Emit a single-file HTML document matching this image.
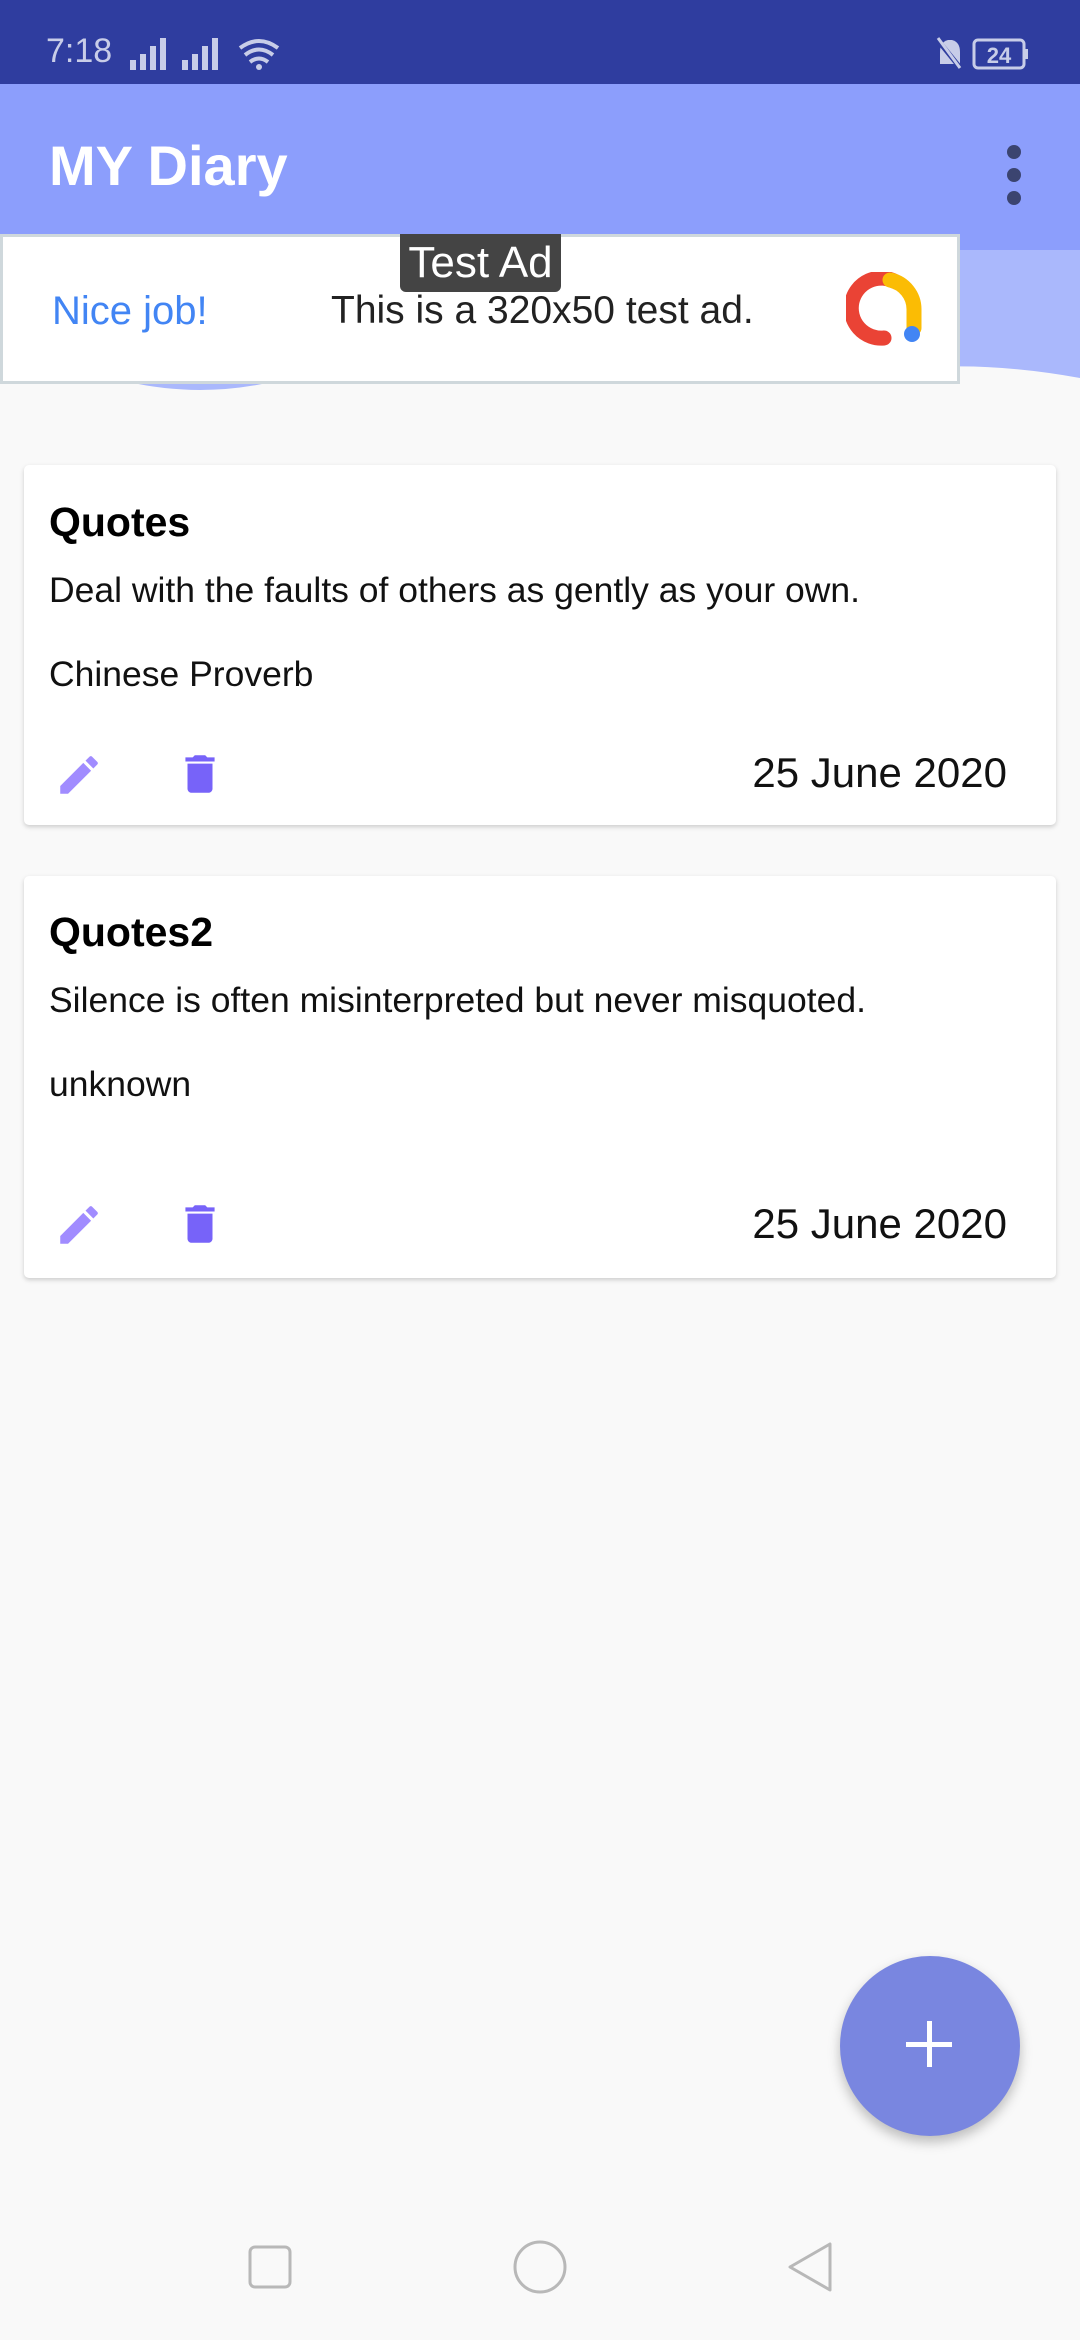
<!DOCTYPE html>
<html><head><meta charset="utf-8"><style>
*{margin:0;padding:0;box-sizing:border-box}
body{width:1080px;height:2340px;background:#f9f9f9;font-family:"Liberation Sans",sans-serif;position:relative;overflow:hidden}
.abs{position:absolute}
.card{position:absolute;left:24px;width:1032px;background:#fff;border-radius:5px;box-shadow:0 2px 5px rgba(0,0,0,.18)}
.t{position:absolute;left:25px;font-weight:bold;font-size:41px;color:#000;line-height:1}
.b{position:absolute;left:25px;font-size:35.5px;color:#111;line-height:1;white-space:nowrap}
.d{position:absolute;right:49px;font-size:42px;color:#111;line-height:1}
</style></head><body>
<div class="abs" style="left:0;top:0;width:1080px;height:84px;background:#2f3d9f"></div>
<div class="abs" style="left:46px;top:34px;color:#c8cde8;font-size:34px;line-height:1">7:18</div>
<svg class="abs" style="left:128px;top:36px" width="160" height="36" viewBox="0 0 160 36">
<g fill="#c8cde8"><rect x="2" y="24" width="6" height="10"/><rect x="12" y="18" width="6" height="16"/><rect x="22" y="10" width="6" height="24"/><rect x="32" y="2" width="6" height="32"/>
<rect x="54" y="24" width="6" height="10"/><rect x="64" y="18" width="6" height="16"/><rect x="74" y="10" width="6" height="24"/><rect x="84" y="2" width="6" height="32"/></g>
<path d="M112 12 Q131 -2 150 12 M117 19 Q131 8 145 19 M122 26 Q131 19 140 26" stroke="#c8cde8" stroke-width="4" fill="none"/><circle cx="131" cy="31" r="3" fill="#c8cde8"/></svg>
<svg class="abs" style="left:934px;top:36px" width="100" height="36" viewBox="0 0 100 36">
<path d="M6 28 L6 16 Q6 6 14 4 L18 4 Q26 6 26 16 L26 28 Z" fill="#c8cde8"/><line x1="2" y1="2" x2="28" y2="34" stroke="#2f3d9f" stroke-width="5"/><line x1="4" y1="2" x2="26" y2="32" stroke="#c8cde8" stroke-width="3"/>
<rect x="40" y="4" width="50" height="28" rx="4" fill="none" stroke="#c8cde8" stroke-width="3"/><rect x="91" y="13" width="3" height="10" fill="#c8cde8"/>
<text x="65" y="27" text-anchor="middle" font-family="Liberation Sans" font-weight="bold" font-size="22" fill="#c8cde8">24</text></svg>
<div class="abs" style="left:0;top:84px;width:1080px;height:170px;background:#8c9efc"></div>
<svg class="abs" style="left:0;top:250px" width="1080" height="150" viewBox="0 0 1080 150">
<path d="M0 0 H1080 V128 Q980 110 900 120 L900 0 Z" fill="#aab8fc"/>
<path d="M120 130 Q200 150 280 130 L280 120 L120 120Z" fill="#aab8fc"/></svg>
<div class="abs" style="left:49px;top:138px;color:#fff;font-size:56px;font-weight:bold;line-height:1">MY Diary</div>
<div class="abs" style="left:1007px;top:145px;width:14px;height:14px;border-radius:7px;background:#3b4470"></div>
<div class="abs" style="left:1007px;top:168px;width:14px;height:14px;border-radius:7px;background:#3b4470"></div>
<div class="abs" style="left:1007px;top:191px;width:14px;height:14px;border-radius:7px;background:#3b4470"></div>
<div class="abs" style="left:0;top:234px;width:960px;height:150px;background:#fff;border:3px solid #cfd8dc"></div>
<div class="abs" style="left:400px;top:234px;width:161px;height:58px;background:#444;border-radius:0 0 6px 6px;color:#fff;font-size:44px;line-height:58px;text-align:center">Test Ad</div>
<div class="abs" style="left:52px;top:291px;color:#4285f4;font-size:40px;line-height:40px">Nice job!</div>
<div class="abs" style="left:331px;top:291px;color:#222;font-size:39px;line-height:40px">This is a 320x50 test ad.</div>
<svg class="abs" style="left:846px;top:272px" width="80" height="76" viewBox="0 0 80 76">
<path d="M38 66 A30 30 0 1 1 50 10" stroke="#ea4335" stroke-width="15" fill="none" stroke-linecap="round"/>
<path d="M44 8 A30 30 0 0 1 68 38 L68 56" stroke="#fbbc04" stroke-width="15" fill="none" stroke-linecap="round"/>
<circle cx="66" cy="62" r="8" fill="#4285f4"/></svg>

<div class="card" style="top:465px;height:360px">
<div class="t" style="top:37px">Quotes</div>
<div class="b" style="top:108px">Deal with the faults of others as gently as your own.</div>
<div class="b" style="top:192px">Chinese Proverb</div>
<svg class="abs" style="left:30px;top:285px" width="50" height="50" viewBox="0 0 24 24"><path d="M3 17.25V21h3.75L17.81 9.94l-3.75-3.75L3 17.25zM20.71 7.04a1 1 0 0 0 0-1.41l-2.34-2.34a1 1 0 0 0-1.41 0l-1.83 1.83 3.75 3.75 1.83-1.83z" fill="#a18cff"/></svg>
<svg class="abs" style="left:151px;top:284px" width="50" height="50" viewBox="0 0 24 24"><path d="M6 19c0 1.1.9 2 2 2h8c1.1 0 2-.9 2-2V7H6v12zM19 4h-3.5l-1-1h-5l-1 1H5v2h14V4z" fill="#7763f9"/></svg>
<div class="d" style="top:287px">25 June 2020</div>
</div>

<div class="card" style="top:876px;height:402px">
<div class="t" style="top:36px">Quotes2</div>
<div class="b" style="top:107px">Silence is often misinterpreted but never misquoted.</div>
<div class="b" style="top:191px">unknown</div>
<svg class="abs" style="left:30px;top:324px" width="50" height="50" viewBox="0 0 24 24"><path d="M3 17.25V21h3.75L17.81 9.94l-3.75-3.75L3 17.25zM20.71 7.04a1 1 0 0 0 0-1.41l-2.34-2.34a1 1 0 0 0-1.41 0l-1.83 1.83 3.75 3.75 1.83-1.83z" fill="#a18cff"/></svg>
<svg class="abs" style="left:151px;top:323px" width="50" height="50" viewBox="0 0 24 24"><path d="M6 19c0 1.1.9 2 2 2h8c1.1 0 2-.9 2-2V7H6v12zM19 4h-3.5l-1-1h-5l-1 1H5v2h14V4z" fill="#7763f9"/></svg>
<div class="d" style="top:327px">25 June 2020</div>
</div>

<div class="abs" style="left:840px;top:1956px;width:180px;height:180px;border-radius:90px;background:#7986e0;box-shadow:0 6px 12px rgba(0,0,0,.25)"></div>
<div class="abs" style="left:906px;top:2042px;width:46px;height:5px;background:#fff"></div>
<div class="abs" style="left:927px;top:2021px;width:5px;height:46px;background:#fff"></div>

<svg class="abs" style="left:0;top:2230px" width="1080" height="80" viewBox="0 0 1080 80">
<rect x="250" y="17" width="40" height="40" rx="5" fill="none" stroke="#b8b8b8" stroke-width="3"/>
<circle cx="540" cy="37" r="25" fill="none" stroke="#b8b8b8" stroke-width="3"/>
<path d="M830 14 L830 60 L790 37 Z" fill="none" stroke="#b8b8b8" stroke-width="3" stroke-linejoin="round"/>
</svg>
</body></html>
